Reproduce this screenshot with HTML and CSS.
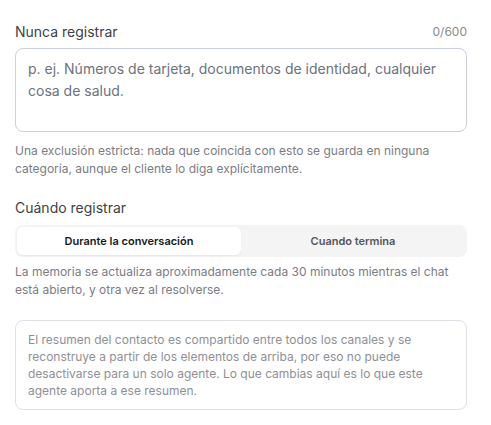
FILE: index.html
```html
<!DOCTYPE html>
<html lang="es">
<head>
  <meta charset="UTF-8" />
  <title>Memoria</title>
  <link rel="stylesheet" href="styles.css">
</head>
<body>
  <div class="panel">
    <div class="field-head">
      <label for="never-log">Nunca registrar</label>
      <span class="counter">0/600</span>
    </div>
    <textarea id="never-log" placeholder="p. ej. Números de tarjeta, documentos de identidad, cualquier cosa de salud."></textarea>
    <p class="hint">Una exclusión estricta: nada que coincida con esto se guarda en ninguna categoría, aunque el cliente lo diga explícitamente.</p>

    <div class="section-title">Cuándo registrar</div>
    <div class="segmented">
      <button class="seg active">Durante la conversación</button>
      <button class="seg">Cuando termina</button>
    </div>
    <p class="hint">La memoria se actualiza aproximadamente cada 30 minutos mientras el chat está abierto, y otra vez al resolverse.</p>

    <div class="note">
      El resumen del contacto es compartido entre todos los canales y se reconstruye a partir de los elementos de arriba, por eso no puede desactivarse para un solo agente. Lo que cambias aquí es lo que este agente aporta a ese resumen.
    </div>
  </div>
</body>
</html>
```

FILE: styles.css
```css
body {
  margin: 0;
  background: #fff;
  font-family: Inter, "Noto Sans", sans-serif;
  color: #3f3f46;
}
.panel {
  width: 452px;
  margin-left: 15px;
  padding-top: 22px;
}
.field-head {
  display: flex;
  justify-content: space-between;
  align-items: center;
  height: 18px;
  margin-bottom: 8px;
}
.field-head label {
  font-size: 14px;
  color: #3f3f46;
}
.counter {
  font-size: 12px;
  color: #8a8a93;
}
textarea {
  display: block;
  box-sizing: border-box;
  width: 100%;
  height: 84px;
  padding: 9px 12px;
  border: 1px solid #cbd0da;
  border-radius: 8px;
  font-family: inherit;
  font-size: 14px;
  line-height: 22px;
  resize: none;
  outline: none;
}
textarea::placeholder {
  color: #6b7280;
}
.hint {
  margin: 10px 0 0;
  font-size: 12px;
  line-height: 18px;
  color: #7c7c85;
}
.section-title {
  margin-top: 21px;
  font-size: 14px;
  line-height: 18px;
  color: #3f3f46;
}
.segmented {
  display: flex;
  margin-top: 8px;
  padding: 2px;
  background: #f4f4f5;
  border-radius: 8px;
}
.seg {
  flex: 1;
  height: 28px;
  border: none;
  border-radius: 6px;
  background: transparent;
  font-family: inherit;
  font-size: 11px;
  font-weight: 600;
  color: #55555c;
  cursor: pointer;
}
.seg.active {
  background: #fff;
  color: #18181b;
  box-shadow: 0 1px 2px rgba(0, 0, 0, 0.06);
}
.segmented + .hint {
  margin-top: 6px;
}
.note {
  margin-top: 21px;
  padding: 10px 12px 10px 12px;
  border: 1px solid #dcdfe5;
  border-radius: 8px;
  font-size: 12px;
  line-height: 17px;
  color: #8f8f97;
}
```
